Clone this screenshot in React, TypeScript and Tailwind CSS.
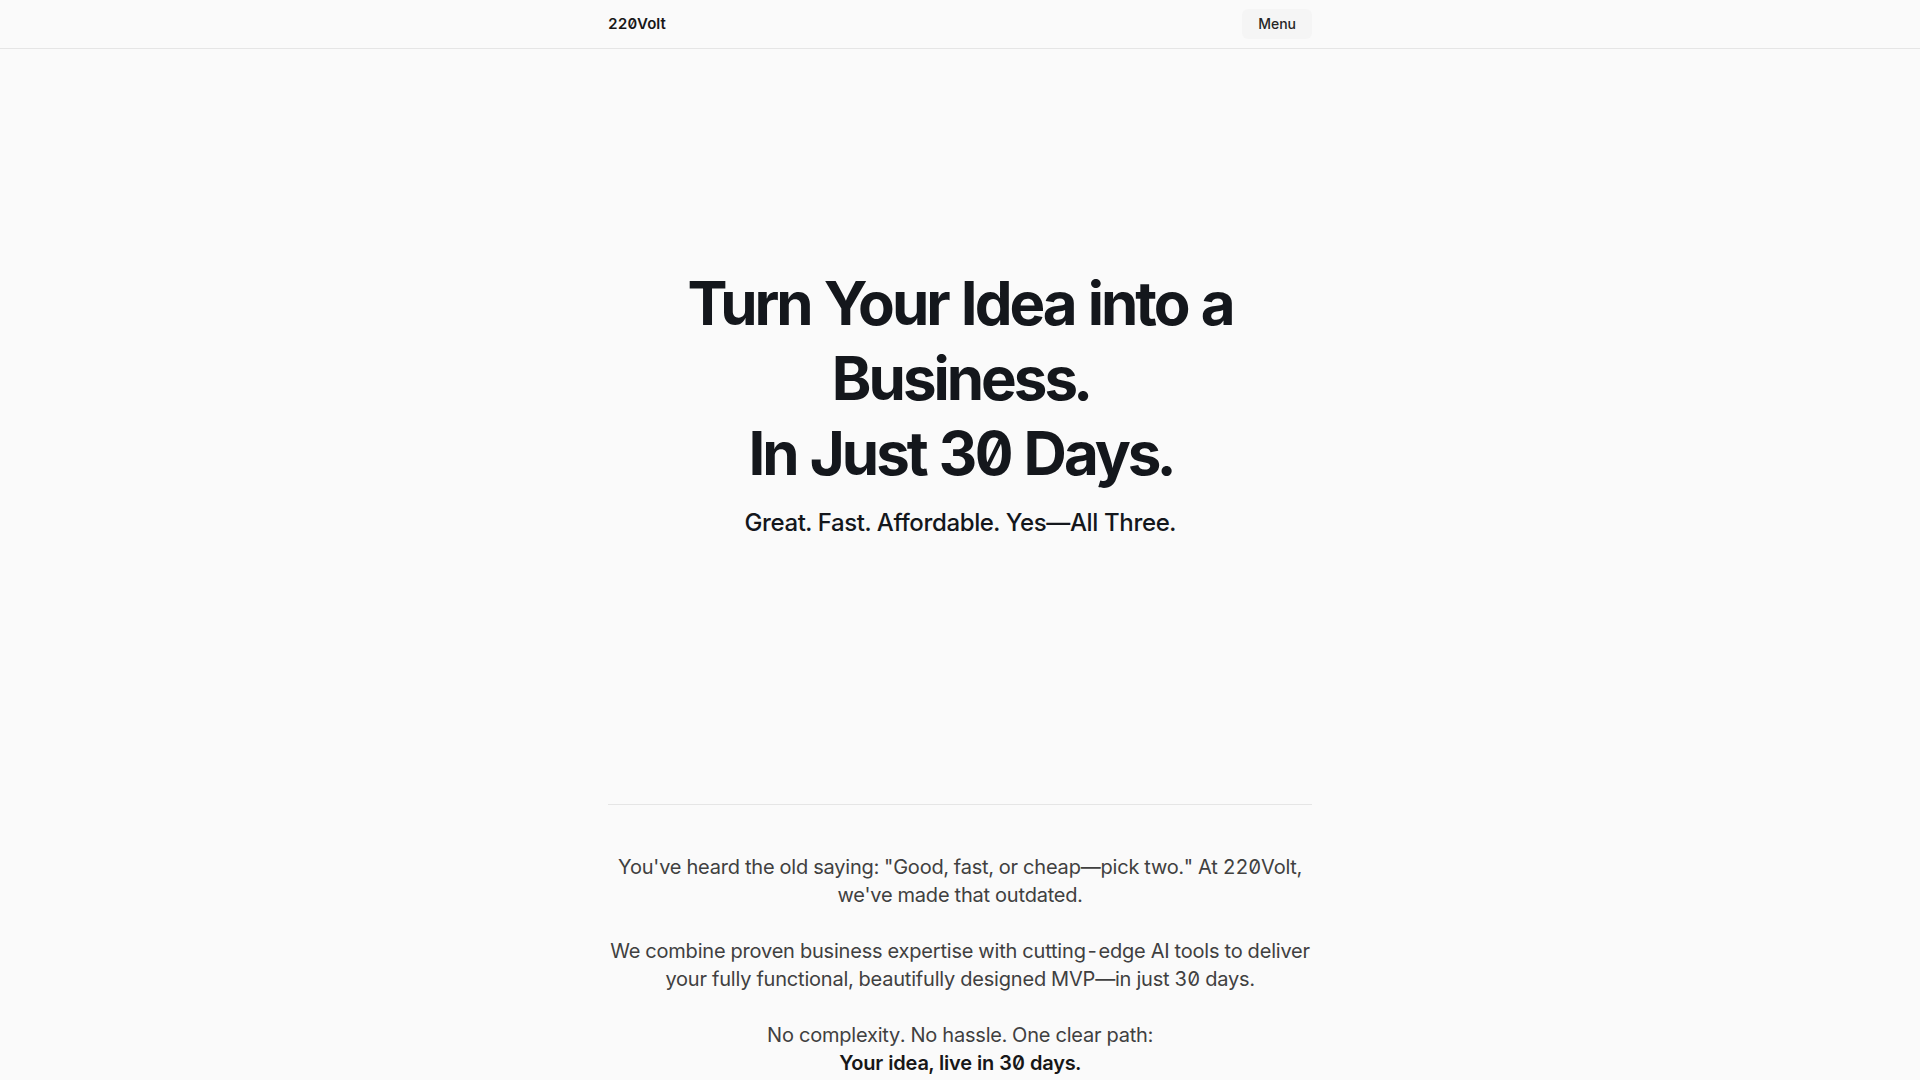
import React from "react";

/* ------------------------------------------------------------------ */
/*  Landing page: header, hero and intro copy                         */
/* ------------------------------------------------------------------ */

const fontStack = {
  fontFamily: "Inter, 'Noto Sans', 'Liberation Sans', sans-serif",
  fontFeatureSettings: "'zero' 1, 'tnum' 1",
};

function Header() {
  return (
    <header className="border-b border-neutral-200">
      <div className="max-w-3xl mx-auto px-8 h-12 flex items-center justify-between">
        <a href="#" className="text-[15px] font-semibold text-neutral-900">
          220Volt
        </a>
        <button className="h-[30px] px-4 rounded-md bg-neutral-100 text-sm font-medium text-neutral-800">
          Menu
        </button>
      </div>
    </header>
  );
}

function Hero() {
  return (
    <section className="max-w-3xl mx-auto px-8 pt-[217px] pb-[265px] text-center">
      <h1 className="text-6xl leading-[75px] font-bold tracking-tighter text-[#14171c]">
        Turn Your Idea into a
        <br />
        Business.
        <br />
        In Just 30 Days.
      </h1>
      <p className="mt-4 text-2xl font-medium tracking-[-0.015em] text-[#14171c]">
        Great. Fast. Affordable. Yes—All Three.
      </p>
    </section>
  );
}

function Intro() {
  return (
    <section className="max-w-3xl mx-auto px-8">
      <div className="border-t border-neutral-200 pt-12 pb-24 text-center text-xl leading-7 tracking-[-0.01em] text-neutral-700 space-y-7">
        <p>
          You've heard the old saying: "Good, fast, or cheap—pick two." At
          220Volt, we've made that outdated.
        </p>
        <p>
          We combine proven business expertise with cutting-edge AI tools to
          deliver your fully functional, beautifully designed MVP—in just 30
          days.
        </p>
        <p>
          No complexity. No hassle. One clear path:
          <br />
          <strong className="font-semibold text-neutral-900">
            Your idea, live in 30 days.
          </strong>
        </p>
      </div>
    </section>
  );
}

export default function App() {
  return (
    <div className="min-h-screen bg-[#fafafa]" style={fontStack}>
      <Header />
      <Hero />
      <Intro />
    </div>
  );
}
